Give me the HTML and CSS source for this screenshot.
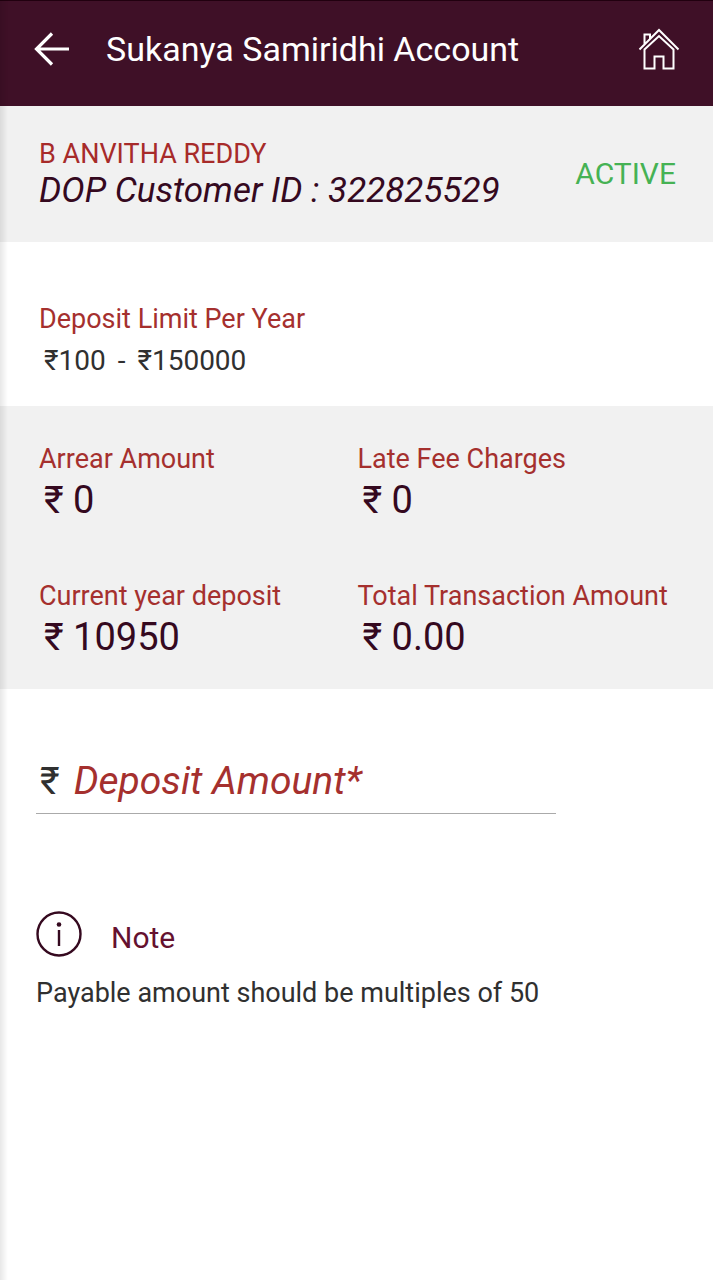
FILE: index.html
```html
<!DOCTYPE html>
<html lang="en">
<head>
<meta charset="utf-8">
<meta name="viewport" content="width=device-width, initial-scale=1">
<title>Sukanya Samiridhi Account</title>
<link rel="stylesheet" href="styles.css">
</head>
<body>
<header class="app-bar">
  <button class="icon-button" type="button" aria-label="Back">
    <svg class="back-icon" viewBox="0 0 36 34" fill="none" stroke="currentColor" stroke-width="3.200"><path d="M35 17H3M18 1.500L2.500 17L18 32.500"/></svg>
  </button>
  <h1 class="title">Sukanya Samiridhi Account</h1>
  <button class="icon-button" type="button" aria-label="Home">
    <svg class="home-icon" viewBox="0 0 42 42" fill="none" stroke="currentColor" stroke-width="2"><path d="M1.500 21.500L21 2L40.500 21.500M6.500 16.500V6.500H12V11"/><path d="M6.500 21.500V40.500H16.500V28.500H25.500V40.500H35.500V21.500L21 8Z"/></svg>
  </button>
</header>
<main>
  <section class="customer">
    <div>
      <p class="name">B ANVITHA REDDY</p>
      <p class="customer-id">DOP Customer ID : 322825529</p>
    </div>
    <p class="status">ACTIVE</p>
  </section>
  <section class="limit">
    <h2 class="label">Deposit Limit Per Year</h2>
    <p class="range"><span>₹100</span> <span>-</span> <span>₹150000</span></p>
  </section>
  <dl class="summary">
    <div><dt class="label">Arrear Amount</dt><dd class="value">₹ 0</dd></div>
    <div><dt class="label">Late Fee Charges</dt><dd class="value">₹ 0</dd></div>
    <div><dt class="label">Current year deposit</dt><dd class="value">₹ 10950</dd></div>
    <div><dt class="label">Total Transaction Amount</dt><dd class="value">₹ 0.00</dd></div>
  </dl>
  <form class="deposit">
    <label class="currency" for="amount">₹</label>
    <input class="amount" id="amount" type="text" inputmode="numeric" placeholder="Deposit Amount*" aria-label="Deposit Amount" required>
  </form>
  <section class="note">
    <div class="note-heading">
      <svg class="info-icon" viewBox="0 0 46 46" fill="none" stroke="currentColor" stroke-width="2.400"><circle cx="23" cy="23" r="21.500"/><path d="M23 19V35"/><circle cx="23" cy="13.500" r="2.300" fill="currentColor" stroke="none"/></svg>
      <h2 class="note-title">Note</h2>
    </div>
    <p class="note-text">Payable amount should be multiples of 50</p>
  </section>
</main>
</body>
</html>
```
FILE: styles.css
```css
* { box-sizing: border-box; }
body {
  margin: 0;
  min-height: 100vh;
  background: #fff;
  color: #303030;
  font-family: Roboto, "Noto Sans", sans-serif;
  font-size: 27px;
  line-height: 32px;
}
/* soft shade along the window's left edge */
body::before {
  content: "";
  position: fixed;
  inset: 0 auto 0 0;
  width: 8px;
  background: linear-gradient(to right, rgba(0, 0, 0, .09), rgba(0, 0, 0, 0));
  pointer-events: none;
}
h1, h2, p, dl, dd { margin: 0; font-weight: 400; }
.app-bar {
  display: flex;
  align-items: center;
  height: 106px;
  padding: 0 33px 10px 34px;
  border-top: 1px solid #21000f;
  background: #3f1027;
  color: #fff;
}
.icon-button {
  display: flex;
  padding: 0;
  border: 0;
  background: none;
  color: inherit;
}
.back-icon { width: 36px; height: 34px; }
.home-icon { width: 42px; height: 42px; }
.title { flex: 1; padding-left: 36px; font-size: 34px; line-height: 40px; }
.customer {
  display: flex;
  justify-content: space-between;
  align-items: center;
  padding: 31px 37px 31px 39px;
  background: #f1f1f1;
}
.name { color: #a72b2a; line-height: 34px; }
.customer-id { color: #35091f; font-size: 35px; font-style: italic; line-height: 40px; }
.status { color: #46b254; font-size: 30px; }
.label { color: #a5302e; font-size: 27px; line-height: 32px; }
.limit { padding: 61px 39px 27px; }
.range {
  display: flex;
  gap: 12px;
  padding: 7px 0 0 5px;
  font-size: 28px;
  line-height: 37px;
}
.summary {
  display: grid;
  grid-template-columns: 1fr 1fr;
  row-gap: 55px;
  padding: 37px 37px 27px 39px;
  background: #f1f1f1;
}
.value { padding-left: 5px; color: #35091f; font-size: 38px; line-height: 50px; }
.deposit {
  display: flex;
  align-items: center;
  width: 73%;
  margin: 63px 0 0 36px;
  padding-bottom: 3px;
  border-bottom: 1px solid #aaa;
  font-size: 38px;
  line-height: 58px;
}
.currency { padding: 0 14px 0 4px; }
.amount {
  flex: 1;
  min-width: 0;
  padding: 0;
  border: 0;
  outline: 0;
  background: none;
  color: #a5302e;
  font: inherit;
  font-size: 39px;
  font-style: italic;
}
.amount::placeholder { color: #a5302e; opacity: 1; }
.note { padding: 97px 36px; }
.note-heading { display: flex; align-items: center; gap: 29px; color: #35091f; }
.info-icon { width: 46px; height: 46px; }
.note-title { padding-top: 8px; color: #65112f; font-size: 30px; line-height: 38px; }
.note-text { padding-top: 20px; }
```
